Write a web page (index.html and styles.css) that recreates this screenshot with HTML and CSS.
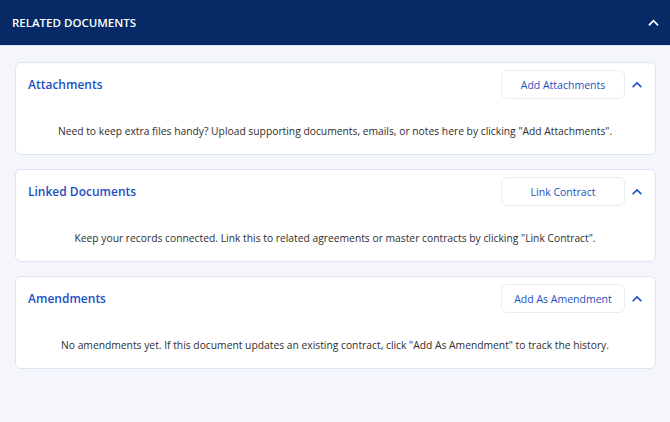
FILE: index.html
```html
<!DOCTYPE html>
<html lang="en">

<head>
    <meta charset="UTF-8">
    <meta name="viewport" content="width=device-width, initial-scale=1.0">
    <title>Related Documents</title>
    <link rel="stylesheet" href="styles.css">
</head>

<body class="main">
    <div class="top-bar">
        <h2>Related Documents</h2>
        <svg class="chevron chevron-light" viewBox="0 0 12 8" width="11" height="7">
            <path d="M1.5 6.5 L6 2 L10.5 6.5" />
        </svg>
    </div>

    <div class="panel">
        <div class="card">
            <div class="card-head">
                <h3>Attachments</h3>
                <button class="btn-outline">Add Attachments</button>
                <svg class="chevron" viewBox="0 0 12 8" width="10" height="7">
                    <path d="M1.5 6.5 L6 2 L10.5 6.5" />
                </svg>
            </div>
            <p>Need to keep extra files handy? Upload supporting documents, emails, or notes here by clicking "Add Attachments".</p>
        </div>

        <div class="card">
            <div class="card-head">
                <h3>Linked Documents</h3>
                <button class="btn-outline">Link Contract</button>
                <svg class="chevron" viewBox="0 0 12 8" width="10" height="7">
                    <path d="M1.5 6.5 L6 2 L10.5 6.5" />
                </svg>
            </div>
            <p>Keep your records connected. Link this to related agreements or master contracts by clicking "Link Contract".</p>
        </div>

        <div class="card">
            <div class="card-head">
                <h3>Amendments</h3>
                <button class="btn-outline">Add As Amendment</button>
                <svg class="chevron" viewBox="0 0 12 8" width="10" height="7">
                    <path d="M1.5 6.5 L6 2 L10.5 6.5" />
                </svg>
            </div>
            <p>No amendments yet. If this document updates an existing contract, click "Add As Amendment" to track the history.</p>
        </div>
    </div>
</body>

</html>
```

FILE: styles.css
```css
.main {
    margin: 0;
    background-color: #f4f6fb;
    font-family: "Open Sans", "Noto Sans", sans-serif;
    color: #333;
}

.top-bar {
    display: flex;
    align-items: center;
    justify-content: space-between;
    height: 45px;
    padding: 0 11px 0 12px;
    background-color: #052a65;
    border-bottom: 1px solid #dfe5f1;
}

.top-bar h2 {
    margin: 0;
    font-size: 11.5px;
    font-weight: 600;
    text-transform: uppercase;
    color: #fff;
}

.chevron {
    fill: none;
    stroke: #1f52c6;
    stroke-width: 2;
    stroke-linecap: square;
}

.chevron-light {
    stroke: #fff;
}

.panel {
    display: flex;
    flex-direction: column;
    gap: 14px;
    padding: 16px 14px 16px 15px;
}

.card {
    background-color: #fff;
    border: 1px solid #dde4f3;
    border-radius: 6px;
    padding: 7px 13px 15px 12px;
}

.card-head {
    display: flex;
    align-items: center;
}

.card-head h3 {
    flex: 1;
    margin: 0;
    font-size: 12px;
    font-weight: 600;
    color: #1d4fc4;
}

.btn-outline {
    width: 124px;
    height: 29px;
    padding: 0;
    background-color: #fff;
    border: 1px solid #e8ecf4;
    border-radius: 6px;
    font-family: inherit;
    font-size: 10.5px;
    color: #1d4fc4;
    margin-right: 7px;
}

.card p {
    margin: 24px 0 0;
    font-size: 10.3px;
    line-height: 16px;
    text-align: center;
    color: #2e2e2e;
}
```
